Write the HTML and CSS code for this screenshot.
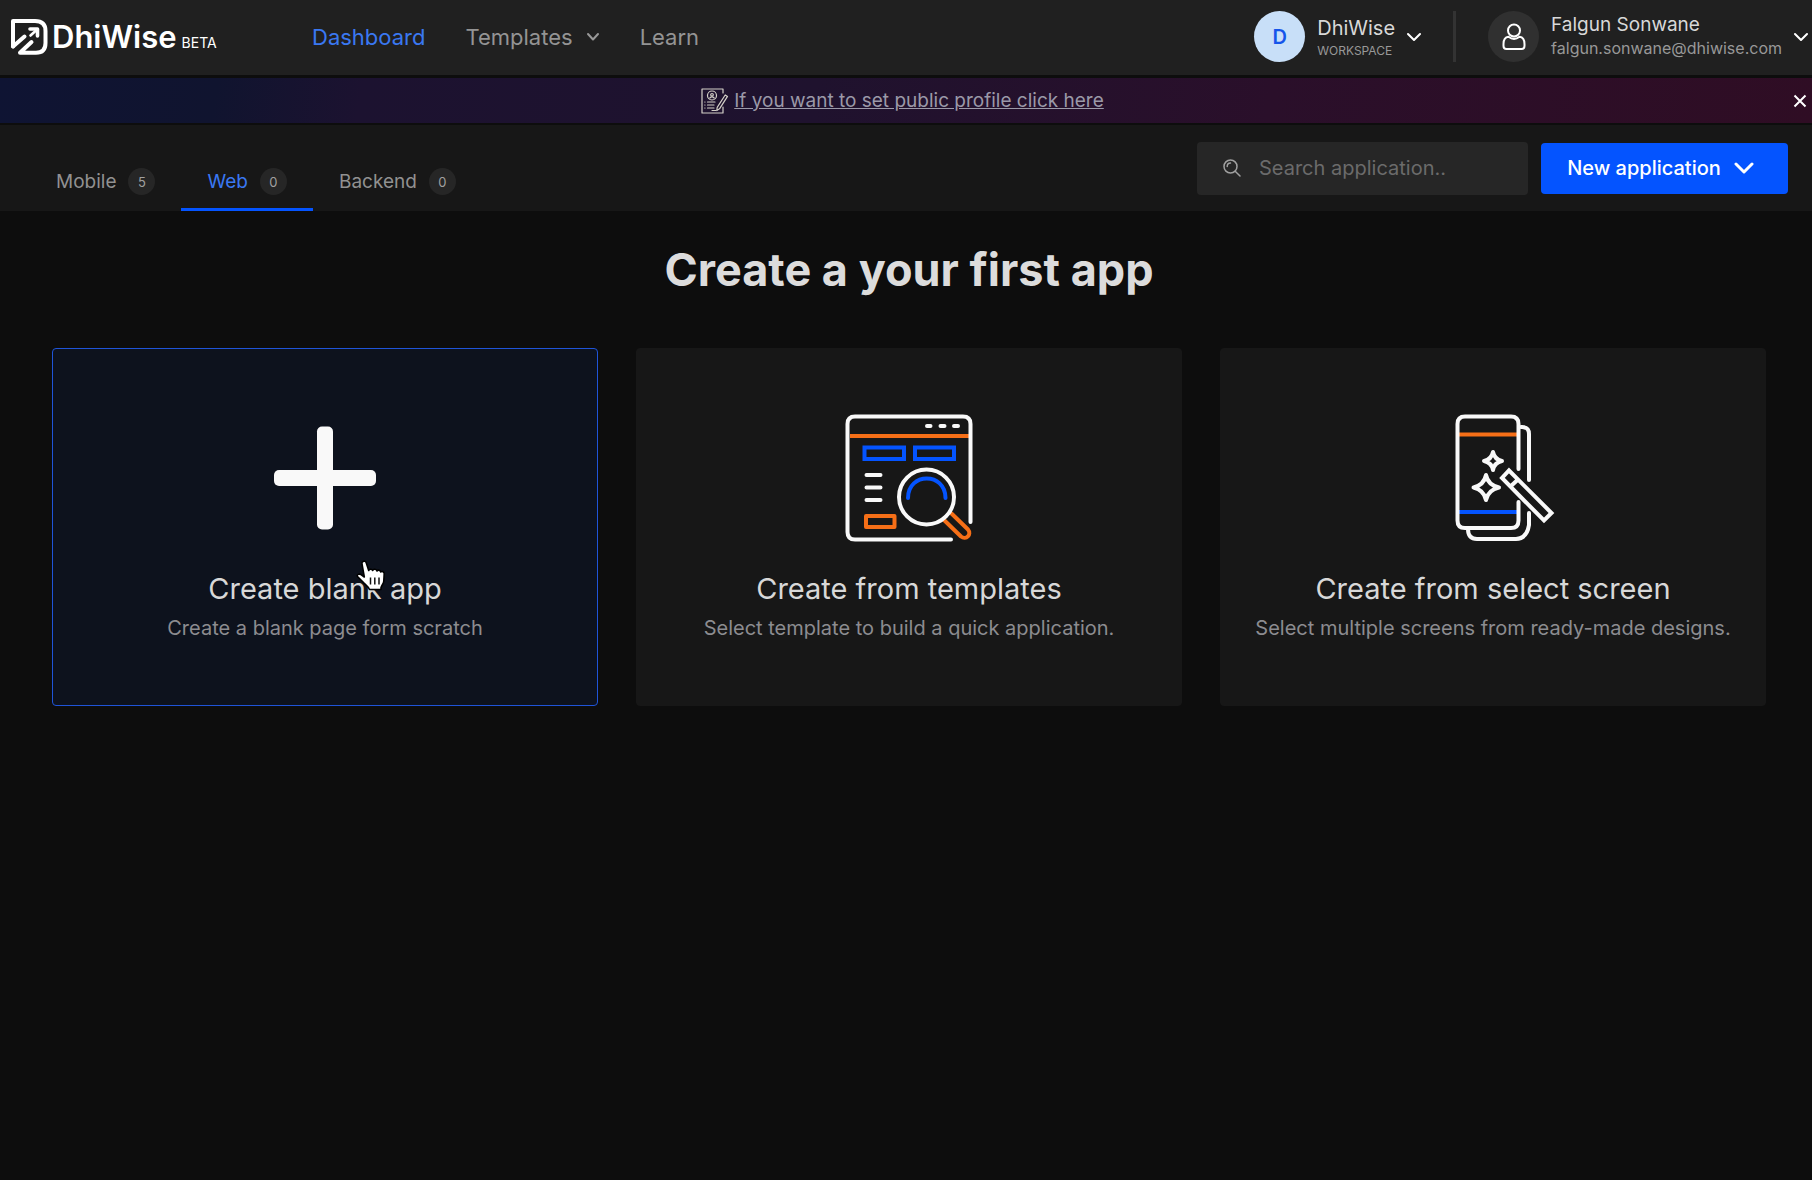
FILE: index.html
```html
<!DOCTYPE html>
<html lang="en">
<head>
<meta charset="utf-8">
<meta name="viewport" content="width=device-width, initial-scale=1">
<title>DhiWise - Dashboard</title>
<link rel="stylesheet" href="styles.css">
</head>
<body>
<header class="topbar">
  <a class="logo" href="#">
    <svg class="logo-mark" viewBox="0 0 38 38" aria-hidden="true">
      <g fill="none" stroke="#fff" stroke-width="4" stroke-linecap="round" stroke-linejoin="round">
        <path d="M3 28.500V3H25Q35.500 3 35.500 13V25Q35.500 34.800 26 34.800H10L21.500 24"/>
        <path d="M3 28.500L14.500 18.500"/>
        <path d="M20 11H27.500V18" stroke-width="3.600"/>
        <path d="M20.500 17.500L26 12.500" stroke-width="2.600"/>
      </g>
    </svg>
    <span class="logo-name">DhiWise</span>
    <span class="logo-tag">BETA</span>
  </a>
  <nav class="mainnav">
    <a class="nav-link active" href="#">Dashboard</a>
    <a class="nav-link" href="#">Templates
      <svg class="chev" viewBox="0 0 14 10" aria-hidden="true"><path d="M2 2L7 7.5L12 2"/></svg>
    </a>
    <a class="nav-link" href="#">Learn</a>
  </nav>
  <button class="account" type="button">
    <span class="avatar avatar-team">D</span>
    <span class="account-text team">
      <span class="team-name">DhiWise</span>
      <span class="team-kind">WORKSPACE</span>
    </span>
    <svg class="chev light" viewBox="0 0 14 10" aria-hidden="true"><path d="M1 2L7 8L13 2"/></svg>
  </button>
  <span class="divider"></span>
  <button class="account" type="button">
    <span class="avatar">
      <svg class="person" viewBox="0 0 24 28" aria-hidden="true">
        <circle cx="12" cy="7.500" r="6"/>
        <path d="M6.500 13.800C3.500 14.200 1.500 17 1.500 21V23Q1.500 26 4.500 26H19.500Q22.500 26 22.500 23V21C22.500 17 20.500 14.200 17.500 13.800Q12 18 6.500 13.800Z"/>
      </svg>
    </span>
    <span class="account-text user">
      <span class="user-name">Falgun Sonwane</span>
      <span class="user-mail">falgun.sonwane@dhiwise.com</span>
    </span>
    <svg class="chev light" viewBox="0 0 14 10" aria-hidden="true"><path d="M1 2L7 8L13 2"/></svg>
  </button>
</header>

<div class="banner">
  <a class="banner-link" href="#">
    <svg class="banner-icon" viewBox="0 0 28 26" aria-hidden="true">
      <g fill="none" stroke="#d4d0c8" stroke-width="1.2" stroke-linecap="round" stroke-linejoin="round">
        <path d="M22 5V1H1V25H22V19"/>
        <circle cx="11" cy="7.500" r="4.500"/>
        <circle cx="11" cy="6.800" r="1.300"/>
        <path d="M8.800 10Q11 7.800 13.200 10"/>
        <path d="M6.500 14H14M6.500 17H13M6.500 20H13M3.800 14H4M3.800 17H4M3.800 20H4M11 22.500H15"/>
        <path d="M24.200 7L26.500 8.400L18.500 20.800L15.800 22.500L16.200 19.300Z"/>
      </g>
    </svg>
    <span class="banner-text">If you want to set public profile click here</span>
  </a>
  <button class="banner-close" type="button" aria-label="Close">
    <svg viewBox="0 0 14 14" aria-hidden="true"><path d="M1.500 1.500L12.500 12.500M12.500 1.500L1.500 12.500"/></svg>
  </button>
</div>

<div class="toolbar">
  <nav class="tabs">
    <a class="tab" href="#">Mobile <span class="count">5</span></a>
    <a class="tab active" href="#">Web <span class="count">0</span></a>
    <a class="tab" href="#">Backend <span class="count">0</span></a>
  </nav>
  <div class="actions">
    <label class="search">
      <svg viewBox="0 0 18 18" aria-hidden="true"><circle cx="7.500" cy="7.500" r="6.500"/><path d="M4.200 7.500A3.400 3.400 0 0 1 7.500 4.100M12.200 12.200L17 17"/></svg>
      <input type="text" placeholder="Search application.." aria-label="Search application">
    </label>
    <button class="primary" type="button">New application
      <svg viewBox="0 0 20 12" aria-hidden="true"><path d="M2 2L10 10L18 2"/></svg>
    </button>
  </div>
</div>

<main class="content">
  <h1 class="title">Create a your first app</h1>
  <div class="cards">
    <a class="card selected" href="#">
      <svg class="card-icon" viewBox="0 0 128 128" aria-hidden="true">
        <g fill="#f9f9f9"><rect x="56" y="12.500" width="16" height="103" rx="5"/><rect x="13" y="56" width="102" height="16" rx="5"/></g>
      </svg>
      <span class="card-title">Create blank app</span>
      <span class="card-note">Create a blank page form scratch</span>
      <svg class="pointer" viewBox="0 0 32 34" aria-hidden="true">
        <path d="M8 2.500C9.500 1.700 10.700 2.300 11.200 3.800L13.700 11.500C14 10 17 9.500 17.700 11.500C18.500 9.700 21.300 10 22 12C23 10.500 25.300 11 25.800 13C27 12 29 12.500 29.200 14.500L28.800 22C28.500 24.500 27 26 26 28.500V30.500H14.500C13 27 10 25.500 7.500 22.500L2.500 17.500C1.500 15.500 4 14.500 6 15.500L9.300 18L7 5C6.800 4 7 3 8 2.500Z" fill="#fff" stroke="#000" stroke-width="1.600" stroke-linejoin="round"/>
        <path d="M15.500 18.500V25.500M19.800 18.500V25.500M24 18.500V25.500" stroke="#111" stroke-width="1.500" fill="none"/>
      </svg>
    </a>
    <a class="card" href="#">
      <svg class="card-icon" viewBox="0 0 128 128" aria-hidden="true">
        <g fill="none" stroke-width="4" stroke-linecap="round" stroke-linejoin="round">
          <path stroke="#f66f17" stroke-linecap="butt" d="M5 22H124"/>
          <path stroke="#f9f9f9" d="M106 125.500H10Q2.500 125.500 2.500 118V10Q2.500 2.500 10 2.500H118Q125.500 2.500 125.500 10V108"/>
          <path stroke="#f9f9f9" d="M82 12H85.500M95.500 12H99.500M109 12H113M21.500 61H35.500M21.500 73.500H35.500M21.500 86H35.500"/>
          <path stroke="#0454ff" stroke-linejoin="miter" d="M19.500 33.500H59V45H19.500ZM70 33.500H109V45H70Z"/>
          <path stroke="#f66f17" d="M21 102H49.500V113H21Z"/>
          <path stroke="#f66f17" d="M106.500 99.500L123 115.500C127 120.500 121 126.500 116 122.500L99.500 106.500"/>
          <circle cx="81.500" cy="83" r="27.500" stroke="#f9f9f9"/>
          <path stroke="#0454ff" d="M63 84C63 58 100.500 58 100.500 84"/>
        </g>
      </svg>
      <span class="card-title">Create from templates</span>
      <span class="card-note">Select template to build a quick application.</span>
    </a>
    <a class="card" href="#">
      <svg class="card-icon" viewBox="0 0 128 128" aria-hidden="true">
        <g fill="none" stroke="#f9f9f9" stroke-width="4" stroke-linecap="round" stroke-linejoin="round">
          <path stroke="#f66f17" stroke-linecap="butt" d="M30 20.500H88"/>
          <path stroke="#0454ff" stroke-linecap="butt" d="M30 98H88"/>
          <path d="M89.500 55V10Q89.500 2.500 82 2.500H36Q28.500 2.500 28.500 10V106.500Q28.500 114 36 114H82Q89.500 114 89.500 106.500V88"/>
          <path d="M92 13H93Q100 13 100 20V66M100 99V111Q98 124.500 87 125H48Q39 125 39 115"/>
          <path d="M64 38Q65.500 45.500 73 47Q65.500 48.500 64 56Q62.500 48.500 55 47Q62.500 45.500 64 38ZM57 61Q59 71 70 73.500Q59 76 57 86Q55 76 44.500 73.500Q55 71 57 61Z"/>
          <path stroke-linejoin="miter" d="M80 56.500L122.500 99L115 106.500L73 64ZM82 72L89 65.500"/>
        </g>
      </svg>
      <span class="card-title">Create from select screen</span>
      <span class="card-note">Select multiple screens from ready-made designs.</span>
    </a>
  </div>
</main>
</body>
</html>
```
FILE: styles.css
```css
* { box-sizing: border-box; }
body {
  margin: 0;
  min-height: 100vh;
  background: #0d0d0d;
  color: #e0e0e0;
  font-family: Inter, "Liberation Sans", sans-serif;
}
a { color: inherit; text-decoration: none; }
button { border: 0; padding: 0; background: none; color: inherit; font: inherit; cursor: pointer; }
svg { display: block; flex: none; }

/* Header */
.topbar {
  display: flex;
  align-items: center;
  height: 75px;
  padding: 0 4px 2px 10px;
  background: #202020;
}
.logo { display: flex; align-items: baseline; width: 302px; color: #fff; }
.logo-mark { width: 38px; height: 38px; align-self: center; margin-right: 4px; }
.logo-name { font-size: 31px; line-height: 38px; font-weight: 600; margin-right: 5px; }
.logo-tag { font-size: 14px; }
.mainnav { display: flex; align-items: center; gap: 40px; margin-right: auto; }
.nav-link { display: flex; align-items: center; gap: 13px; font-size: 22px; line-height: 28px; color: #949494; }
.active { color: #3a78f2; }
.chev { width: 14px; height: 10px; fill: none; stroke: #989898; stroke-width: 2; stroke-linecap: round; stroke-linejoin: round; }
.chev.light { stroke: #fff; }
.account { display: flex; align-items: center; gap: 12px; text-align: left; }
.avatar {
  display: flex; align-items: center; justify-content: center;
  width: 51px; height: 51px; border-radius: 50%;
  background: #303030;
}
.avatar-team { background: #c8dff8; color: #1555ea; font-size: 20px; font-weight: 600; }
.person { width: 24px; height: 28px; fill: none; stroke: #fff; stroke-width: 2; stroke-linejoin: round; }
.account-text { display: flex; flex-direction: column; }
.account-text.team { padding-top: 3px; }
.account-text.user { padding-bottom: 2px; }
.team-name { font-size: 20px; line-height: 25px; color: #d8d8d8; }
.team-kind { font-size: 12px; line-height: 20px; color: #989898; }
.user-name { font-size: 19px; line-height: 25px; color: #d8d8d8; }
.user-mail { font-size: 16px; line-height: 23px; color: #989898; }
.divider { width: 3px; height: 51px; margin: 0 32px; background: #333; }

/* Profile banner */
.banner {
  display: flex;
  align-items: center;
  height: 45px;
  margin: 3px 0 2px;
  padding: 0 5px 0 12px;
  background: linear-gradient(100deg, #0f1433 0%, #10142f 12%, #1c1230 20%, #1f122e 45%, #2a0f2a 70%, #2f0d24 100%);
}
.banner-link { display: flex; align-items: center; gap: 5px; margin: 0 auto; color: #9b99a8; }
.banner-icon { width: 28px; height: 26px; }
.banner-text { font-size: 19px; line-height: 24px; text-decoration: underline; }
.banner-close svg { width: 14px; height: 14px; stroke: #fff; stroke-width: 2; }

/* Tabs and actions */
.toolbar {
  display: flex;
  justify-content: space-between;
  height: 86px;
  padding: 0 24px 0 30px;
  background: #171717;
}
.tabs { display: flex; }
.tab {
  display: flex; align-items: center; gap: 12px;
  padding: 30px 26px 0;
  border-bottom: 3px solid transparent;
  font-size: 19px; color: #919191;
}
.tab.active { border-color: #0454ff; color: #3a78f2; }
.count {
  display: flex; align-items: center; justify-content: center;
  width: 27px; height: 27px; border-radius: 50%;
  background: #262626; color: #a0a0a0; font-size: 13px;
}
.actions { display: flex; align-items: center; gap: 13px; }
.search {
  display: flex; align-items: center; gap: 18px;
  width: 331px; height: 53px; padding: 0 26px;
  border-radius: 4px; background: #262626;
}
.search svg { width: 18px; height: 18px; fill: none; stroke: #a0a0a0; stroke-width: 1.5; stroke-linecap: round; }
.search input {
  flex: 1; min-width: 0; border: 0; padding: 0; outline: 0;
  background: none; color: #e0e0e0; font: inherit; font-size: 20px;
}
.search input::placeholder { color: #6b6b6b; opacity: 1; }
.primary {
  display: flex; align-items: center; justify-content: center; gap: 13px;
  width: 247px; height: 51px; padding-right: 8px; border-radius: 4px;
  background: #0454ff; color: #fff; font-size: 20px; font-weight: 500;
}
.primary svg { width: 20px; height: 12px; fill: none; stroke: #fff; stroke-width: 3; stroke-linecap: round; stroke-linejoin: round; }

/* App choices */
.content { padding: 31px 46px 40px 52px; }
.title { margin: 0 0 51px; font-size: 45px; line-height: 55px; font-weight: 700; text-align: center; color: #dcdcdc; }
.cards { display: grid; grid-template-columns: repeat(3, 1fr); gap: 38px; }
.card {
  position: relative;
  display: flex; flex-direction: column; align-items: center;
  padding: 65px 16px 62px;
  border: 1px solid #171717; border-radius: 4px;
  background: #171717;
}
.card.selected { background: #0d121d; border-color: #1f54d8; }
.card-icon { width: 128px; height: 128px; margin-bottom: 27px; }
.card-title { font-size: 29px; line-height: 40px; color: #d8d8d8; }
.card-note { font-size: 20px; line-height: 30px; margin-top: 4px; color: #8c8c90; }
.pointer { position: absolute; left: 56%; top: 210px; width: 32px; height: 34px; margin-left: -3px; }
```
